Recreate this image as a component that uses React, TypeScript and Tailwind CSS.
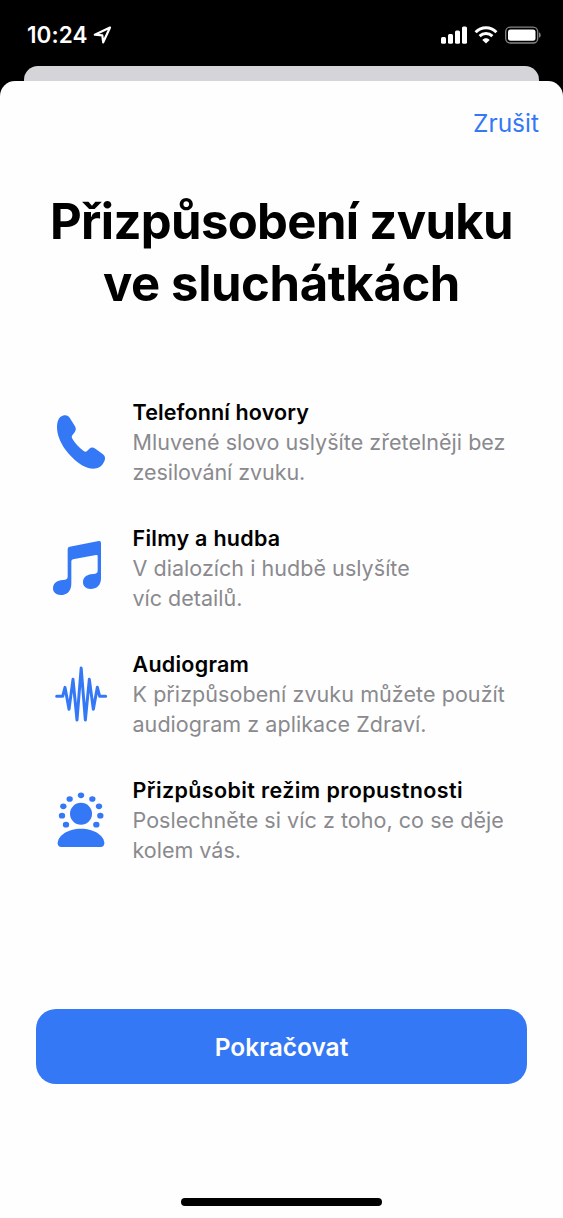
import type { ReactNode } from "react";

const features: {
  title: string;
  titleClass: string;
  lines: { text: string; className: string }[];
  icon: ReactNode;
}[] = [
  {
    title: "Telefonní hovory",
    titleClass: "tracking-[0.120px]",
    lines: [
      { text: "Mluvené slovo uslyšíte zřetelněji bez", className: "tracking-[0.040px]" },
      { text: "zesilování zvuku.", className: "tracking-[-0.060px]" },
    ],
    icon: <PhoneIcon />,
  },
  {
    title: "Filmy a hudba",
    titleClass: "tracking-[0.270px]",
    lines: [
      { text: "V dialozích i hudbě uslyšíte", className: "tracking-[0.040px]" },
      { text: "víc detailů.", className: "tracking-[0px]" },
    ],
    icon: <MusicIcon />,
  },
  {
    title: "Audiogram",
    titleClass: "tracking-[0.250px]",
    lines: [
      { text: "K přizpůsobení zvuku můžete použít", className: "tracking-[0.070px]" },
      { text: "audiogram z aplikace Zdraví.", className: "tracking-[0.050px]" },
    ],
    icon: <WaveformIcon />,
  },
  {
    title: "Přizpůsobit režim propustnosti",
    titleClass: "tracking-[0.390px]",
    lines: [
      { text: "Poslechněte si víc z toho, co se děje", className: "tracking-[0.050px]" },
      { text: "kolem vás.", className: "tracking-[0px]" },
    ],
    icon: <TransparencyIcon />,
  },
];

const dots = [
  [123, 52],
  [89, 63],
  [157, 63],
  [70, 85],
  [177, 85],
  [66, 113],
  [181, 113],
  [78, 140],
  [169, 140],
];

function PhoneIcon() {
  return (
    <svg viewBox="0 6 270 240" className="h-20 w-[90px] shrink-0 fill-[#3478f6]">
      <path d="M61 51C70 44 82 43 88 52L105 79C109 86 108 91 104 97L97 106C94 110 95 113 98 118C106 131 118 144 130 152C135 156 138 156 142 152L148 146C154 141 160 142 166 146L188 162C197 169 196 177 193 184C186 200 174 206 159 206C130 206 98 178 77 150C61 128 51 104 51 82C51 68 54 57 61 51Z" />
    </svg>
  );
}

function MusicIcon() {
  return (
    <svg viewBox="0 6 270 240" className="h-20 w-[90px] shrink-0 fill-[#3478f6]">
      <path d="M89 62L176 45Q183 44 183 51V157C183 178 170 189 152 189C138 189 129 181 129 169C129 155 139 147 153 145L166 143Q173 142 173 135V91Q173 86 168 87L99 100Q94 101 94 106V173C94 195 81 207 62 207C48 207 39 199 39 187C39 174 48 166 62 163L76 161Q83 160 83 153V69Q83 63 89 62Z" />
    </svg>
  );
}

function WaveformIcon() {
  return (
    <svg
      viewBox="0 6 270 240"
      className="h-20 w-[90px] shrink-0 fill-none stroke-[#3478f6]"
      strokeWidth="9"
      strokeLinecap="round"
      strokeLinejoin="round"
    >
      <path d="M50 133H68L75 106L87 172L99 82L111 204L123.500 48L136 204L148 82L160 172L172 106L179 133H197" />
    </svg>
  );
}

function TransparencyIcon() {
  return (
    <svg viewBox="0 6 270 240" className="h-20 w-[90px] shrink-0 fill-[#3478f6]">
      {dots.map(([x, y]) => (
        <ellipse key={`${x}-${y}`} cx={x} cy={y} rx="9.500" ry="8.500" />
      ))}
      <circle cx="123" cy="107" r="33" />
      <path d="M64 207C57 207 53 203 53 196C53 174 82 152 123 152C164 152 193 174 193 196C193 203 189 207 182 207Z" />
    </svg>
  );
}

function StatusBar() {
  return (
    <div className="flex h-[66px] items-start justify-between pt-5 pr-[22px] pl-[27px] text-white">
      <div className="flex items-center">
        <span className="w-[66px] text-[22.500px] leading-[30px] font-semibold tracking-[0.100px] whitespace-nowrap">
          10:24
        </span>
        <svg viewBox="0 0 20 20" className="h-5 w-5 fill-none stroke-white" strokeWidth="2.200" strokeLinejoin="round">
          <path d="M17 2.500L1.800 9.700L9.300 10.300L10.200 17.300Z" />
        </svg>
      </div>
      <div className="flex h-[29px] items-center">
        <svg viewBox="0 0 100 20" className="h-5 w-[100px] fill-white">
          <rect x="0" y="12" width="5" height="6.700" rx="1.500" />
          <rect x="7" y="9" width="5" height="9.700" rx="1.500" />
          <rect x="14" y="5.500" width="5" height="13.200" rx="1.500" />
          <rect x="21" y="1.500" width="5" height="17.200" rx="1.500" />
          <g className="fill-none stroke-white" strokeWidth="3">
            <path d="M34.600 7.200C40.500 1.300 49.500 1.300 55.400 7.200" />
            <path d="M38.600 11.200C42.300 7.600 47.700 7.600 51.400 11.200" />
          </g>
          <path d="M45 18.500L41.300 14.900C43.300 12.700 46.700 12.700 48.700 14.900Z" />
          <rect x="64.700" y="2.200" width="32" height="15.800" rx="4.500" className="fill-none stroke-[#858585]" strokeWidth="1.300" />
          <rect x="67" y="4.500" width="27.500" height="11.200" rx="2.500" />
          <path d="M98 7.500C100.300 8 100.300 12.200 98 12.700Z" className="fill-[#858585]" />
        </svg>
      </div>
    </div>
  );
}

export default function App() {
  return (
    <div className="flex h-[1218px] w-[563px] flex-col overflow-hidden bg-black font-['Inter',sans-serif]">
      <StatusBar />
      <div className="mx-6 h-[15px] shrink-0 rounded-t-[14px] bg-[#d5d4d9]" />

      <main className="flex grow flex-col rounded-t-[15px] bg-[#fefefe]">
        <div className="flex justify-end pt-[27px] pr-6">
          <button className="text-[24.500px] leading-[30px] tracking-[0px] text-[#3478f6]">Zrušit</button>
        </div>

        <h1 className="mt-[53px] flex flex-col items-center text-[49px] leading-[62px] font-bold whitespace-nowrap text-black">
          <span className="tracking-[-0.650px]">Přizpůsobení zvuku</span>
          <span className="tracking-[-0.400px]">ve sluchátkách</span>
        </h1>

        <ul className="mt-[82px] flex flex-col gap-9 pl-10">
          {features.map((feature) => (
            <li key={feature.title} className="flex h-[90px] items-center">
              {feature.icon}
              <div className="ml-[2.500px] text-[21.500px] leading-[30px] whitespace-nowrap">
                <h2 className={`font-semibold text-black ${feature.titleClass}`}>{feature.title}</h2>
                {feature.lines.map((line) => (
                  <p key={line.text} className={`text-[#8a8a8e] ${line.className}`}>
                    {line.text}
                  </p>
                ))}
              </div>
            </li>
          ))}
        </ul>

        <button className="mx-9 mt-[144px] h-[75px] rounded-[20px] bg-[#3478f6] pt-0.5 text-[24.500px] font-semibold tracking-[0px] text-white">
          Pokračovat
        </button>

        <div className="mt-[114px] h-[7.500px] w-[201px] self-center rounded-full bg-black" />
      </main>
    </div>
  );
}
